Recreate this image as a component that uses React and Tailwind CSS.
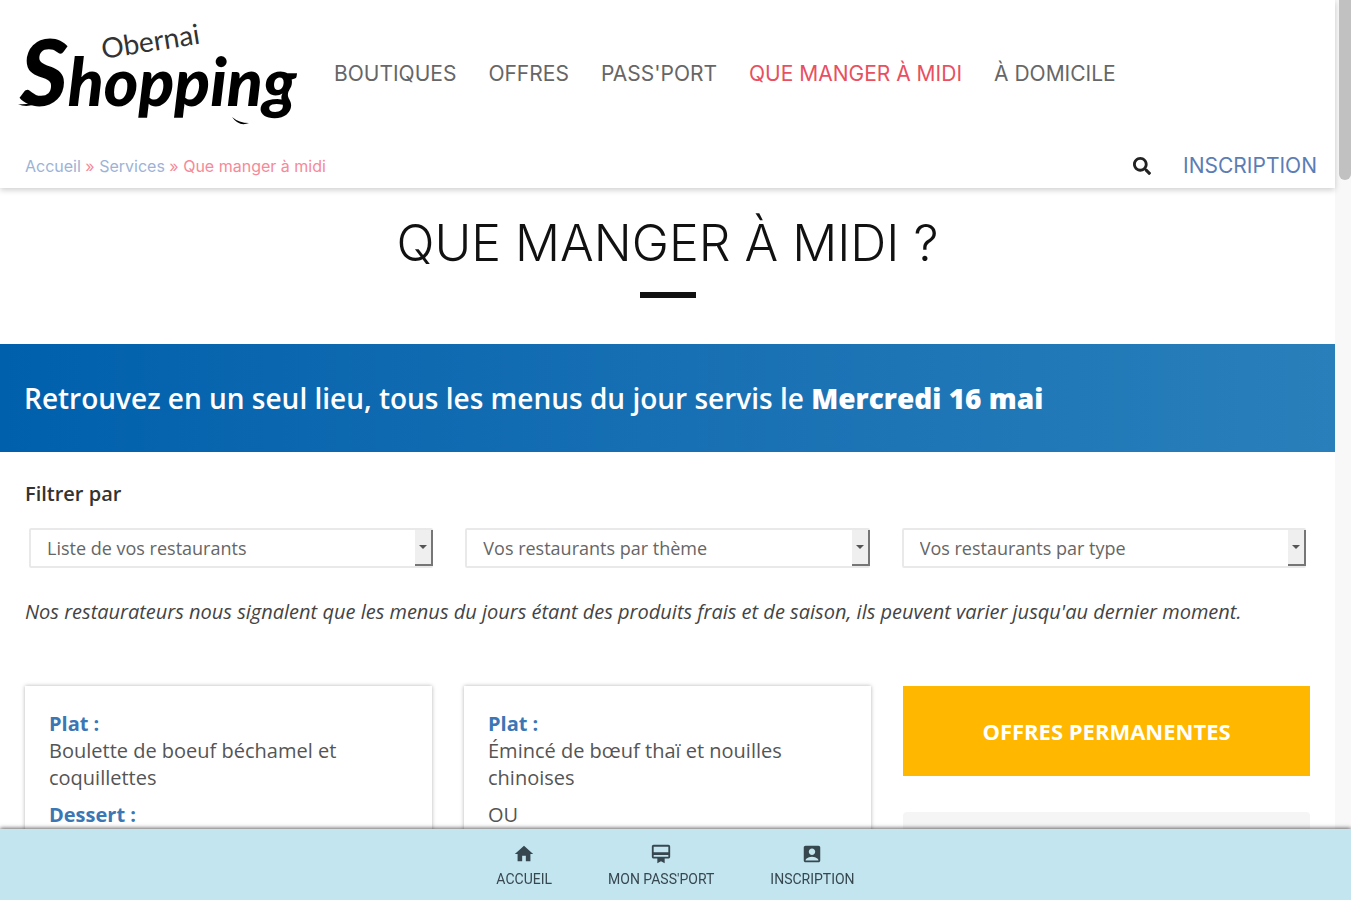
import React from "react";
import { MdHome, MdAccountBox, MdCardMembership } from "react-icons/md";
import { FaSearch } from "react-icons/fa";

const navLinks = [
  { label: "BOUTIQUES" },
  { label: "OFFRES" },
  { label: "PASS'PORT" },
  { label: "QUE MANGER À MIDI", active: true },
  { label: "À DOMICILE" },
];

const filters = [
  { id: "restaurants", label: "Liste de vos restaurants" },
  { id: "theme", label: "Vos restaurants par thème" },
  { id: "type", label: "Vos restaurants par type" },
];

const bottomLinks = [
  { label: "ACCUEIL", icon: MdHome },
  { label: "MON PASS'PORT", icon: MdCardMembership },
  { label: "INSCRIPTION", icon: MdAccountBox },
];

const Logo = () => (
  <svg width="290" height="140" viewBox="-8 -20 290 140" role="img" aria-label="Obernai Shopping">
    <g className="font-['Lato',sans-serif]" fill="#000">
      <text x="87" y="39" fontSize="28" fontWeight="400" fill="#333" transform="rotate(-9 87 39)">
        Obernai
      </text>
      <text x="4" y="86" fontWeight="900" fontStyle="italic">
        <tspan fontSize="92">S</tspan>
        <tspan fontSize="66">hopping</tspan>
      </text>
    </g>
    <path d="M2 84 Q12 89 26 81 Q12 85 2 84Z" />
    <path d="M216 97 Q223 107 233 103 Q223 103 216 97Z" />
  </svg>
);

const Header = () => (
  <header className="relative bg-white shadow-[0_2px_6px_rgba(0,0,0,0.2)]">
    <div className="flex items-center gap-9 pl-2">
      <a href="#accueil" className="shrink-0">
        <Logo />
      </a>
      <nav className="flex gap-8 pt-2 font-['Inter',sans-serif] text-[21px] leading-6 text-[#666]">
        {navLinks.map(({ label, active }) => (
          <a key={label} href="#menu" className={active ? "text-[#e8505f]" : ""}>
            {label}
          </a>
        ))}
      </nav>
    </div>
    <div className="flex items-center justify-between pt-3 pr-[18px] pb-2 pl-[25px]">
      <p className="font-['Inter',sans-serif] text-[16px] leading-7 text-[#f58a98]">
        <a href="#accueil" className="text-[#9db3d6]">Accueil</a> »{" "}
        <a href="#services" className="text-[#9db3d6]">Services</a> » Que manger à midi
      </p>
      <div className="flex items-center gap-8">
        <button type="button" aria-label="Rechercher">
          <FaSearch className="text-lg text-[#222]" />
        </button>
        <a href="#inscription" className="font-['Inter',sans-serif] text-[21px] leading-7 text-[#5b7db5]">
          INSCRIPTION
        </a>
      </div>
    </div>
  </header>
);

const FilterSelect = ({ id, label }) => (
  <div className="relative">
    <select
      id={id}
      aria-label={label}
      className="block h-10 w-full appearance-none rounded-xs border-2 border-[#e9e9e9] bg-white px-4 text-[18px] text-[#666]"
    >
      <option>{label}</option>
    </select>
    <span className="pointer-events-none absolute top-0.5 right-0 bottom-0.5 flex w-[18px] items-center justify-center border-r-2 border-b-2 border-[#767676] bg-[#efefef]">
      <span className="border-x-4 border-t-4 border-x-transparent border-t-[#555]" />
    </span>
  </div>
);

const Card = ({ children }) => (
  <article className="h-60 bg-white px-6 pt-6 text-[20px] leading-[27px] text-[#555] shadow-[0_0_4px_rgba(0,0,0,0.3)]">
    {children}
  </article>
);

const BottomBar = () => (
  <nav className="fixed inset-x-0 bottom-0 flex h-[71px] justify-center gap-14 bg-[#c3e5ef] pt-3.5 shadow-[0_-1px_4px_rgba(0,0,0,0.6)]">
    {bottomLinks.map(({ label, icon: Icon }) => (
      <a key={label} href="#compte" className="flex flex-col items-center gap-1 text-[#37474f]">
        <Icon className="text-[22px]" />
        <span className="font-['Roboto',sans-serif] text-[14px] leading-5">{label}</span>
      </a>
    ))}
  </nav>
);

const App = () => {
  return (
    <div className="h-screen overflow-hidden bg-[#f8f8f8] font-['Open_Sans',sans-serif]">
      <div className="mr-4 min-h-full bg-white">
        <Header />

        <main>
          <h1 className="pt-[26px] text-center font-['Inter',sans-serif] text-[50px] leading-[58px] font-light text-[#111]">
            QUE MANGER À MIDI ?
          </h1>
          <div className="mx-auto mt-5 h-1.5 w-14 bg-[#111]" />

          <p className="mt-[46px] bg-linear-to-r from-[#0060ac] to-[#287fba] px-6 py-9 text-[28px] leading-9 font-semibold text-white">
            Retrouvez en un seul lieu, tous les menus du jour servis le <b>Mercredi 16 mai</b>
          </p>

          <section className="px-[25px] pt-[26px]">
            <h2 className="text-[20px] leading-8 font-semibold text-[#333]">Filtrer par</h2>
            <div className="grid grid-cols-3 gap-8 px-1 pt-[18px]">
              {filters.map((filter) => (
                <FilterSelect key={filter.id} {...filter} />
              ))}
            </div>
            <p className="pt-[30px] text-[20px] leading-7 text-[#444] italic">
              Nos restaurateurs nous signalent que les menus du jours étant des produits frais et de saison, ils peuvent varier jusqu'au dernier moment.
            </p>
          </section>

          <section className="grid grid-cols-3 gap-8 px-[25px] pt-[60px]">
            <Card>
              <b className="block text-[#3b76b5]">Plat :</b>
              <p>Boulette de boeuf béchamel et coquillettes</p>
              <b className="mt-2.5 block text-[#3b76b5]">Dessert :</b>
            </Card>
            <Card>
              <b className="block text-[#3b76b5]">Plat :</b>
              <p>Émincé de bœuf thaï et nouilles chinoises</p>
              <p className="mt-2.5">OU</p>
            </Card>
            <aside>
              <a href="#offres" className="block bg-[#ffb700] py-8 text-center text-[22px] leading-[26px] font-bold text-white">
                OFFRES PERMANENTES
              </a>
              <div className="mt-9 h-32 rounded-sm bg-[#f5f5f5]" />
            </aside>
          </section>
        </main>
      </div>

      <div className="fixed top-0 right-0 h-[180px] w-3 rounded-b-md bg-[#c1c1c1]" />
      <BottomBar />
    </div>
  );
};

export default App;
